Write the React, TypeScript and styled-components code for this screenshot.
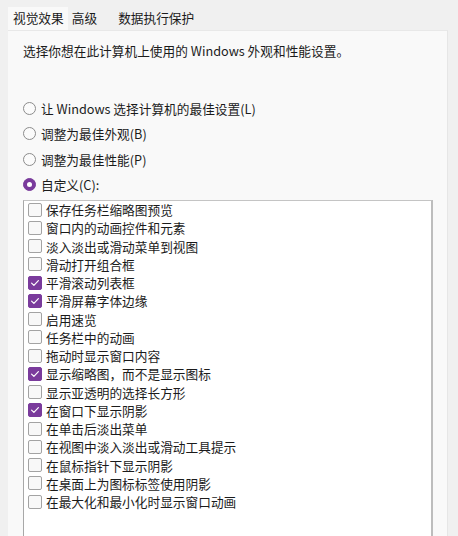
import React from "react";
import styled, { createGlobalStyle } from "styled-components";

const Global = createGlobalStyle`
  html, body { margin: 0; padding: 0; background: #f0f0f0; }
  body {
    font-family: "Noto Sans CJK SC", "Noto Sans", sans-serif;
    color: #1b1b1b;
    font-size: 12.7px;
  }
`;

const Page = styled.div`
  width: 458px;
  height: 536px;
  overflow: hidden;
  background: #f0f0f0;
  display: flex;
  flex-direction: column;
`;

const TabBar = styled.div`
  display: flex;
  align-items: flex-end;
  height: 30px;
  padding-left: 8px;
  flex-shrink: 0;
`;

const Tab = styled.div<{ $active?: boolean; $pl: number; $pr: number }>`
  height: 23px;
  line-height: 22px;
  padding: 0 ${(p) => p.$pr}px 0 ${(p) => p.$pl}px;
  background: ${(p) => (p.$active ? "#f9f9f9" : "transparent")};
  white-space: nowrap;
`;

const Panel = styled.div`
  flex: 1;
  margin: 0 10px 0 8px;
  background: #f9f9f9;
  border-top: 1px solid #e8e8e8;
  border-right: 1px solid #e6e6e6;
  padding: 11px 14px 0 15px;
  display: flex;
  flex-direction: column;
  min-height: 0;
`;

const Description = styled.div`
  line-height: 18px;
  white-space: nowrap;
  margin-bottom: 39px;
`;

const RadioGroup = styled.div`
  display: flex;
  flex-direction: column;
  gap: 7.5px;
  margin-bottom: 6px;
`;

const RadioRow = styled.div`
  display: flex;
  align-items: center;
  height: 18px;
  white-space: nowrap;
`;

const RadioCircle = styled.span<{ $checked?: boolean }>`
  box-sizing: border-box;
  width: 13px;
  height: 13px;
  border-radius: 50%;
  margin-right: 5px;
  flex-shrink: 0;
  display: flex;
  align-items: center;
  justify-content: center;
  border: 1px solid ${(p) => (p.$checked ? "#7a3b9c" : "#8c8c8c")};
  background: ${(p) => (p.$checked ? "#7a3b9c" : "#fbfbfb")};
  &::after {
    content: "";
    display: ${(p) => (p.$checked ? "block" : "none")};
    width: 5px;
    height: 5px;
    border-radius: 50%;
    background: #ffffff;
  }
`;

const ListBox = styled.div`
  background: #ffffff;
  border-top: 1px solid #c4c4c4;
  border-left: 1px solid #a8a8a8;
  border-right: 2px solid #bdbdbd;
  height: 420px;
  padding-left: 4px;
  flex-shrink: 0;
`;

const CheckRow = styled.div`
  display: flex;
  align-items: center;
  height: 18.25px;
  white-space: nowrap;
`;

const CheckBox = styled.span<{ $checked?: boolean }>`
  box-sizing: border-box;
  width: 14px;
  height: 14px;
  border-radius: 2px;
  margin-right: 4px;
  flex-shrink: 0;
  display: flex;
  align-items: center;
  justify-content: center;
  border: 1px solid ${(p) => (p.$checked ? "#7a3b9c" : "#a3a3a3")};
  background: ${(p) => (p.$checked ? "#7a3b9c" : "#f8f8f8")};
`;

const CheckMark = () => (
  <svg width="10" height="10" viewBox="0 0 10 10">
    <path d="M1.6 5.1 L3.9 7.4 L8.4 2.6" fill="none" stroke="#ffffff" strokeWidth="1.2" strokeLinecap="round" strokeLinejoin="round" />
  </svg>
);

const radios = [
  { label: "让 Windows 选择计算机的最佳设置(L)", checked: false },
  { label: "调整为最佳外观(B)", checked: false },
  { label: "调整为最佳性能(P)", checked: false },
  { label: "自定义(C):", checked: true },
];

const items: [string, boolean][] = [
  ["保存任务栏缩略图预览", false],
  ["窗口内的动画控件和元素", false],
  ["淡入淡出或滑动菜单到视图", false],
  ["滑动打开组合框", false],
  ["平滑滚动列表框", true],
  ["平滑屏幕字体边缘", true],
  ["启用速览", false],
  ["任务栏中的动画", false],
  ["拖动时显示窗口内容", false],
  ["显示缩略图，而不是显示图标", true],
  ["显示亚透明的选择长方形", false],
  ["在窗口下显示阴影", true],
  ["在单击后淡出菜单", false],
  ["在视图中淡入淡出或滑动工具提示", false],
  ["在鼠标指针下显示阴影", false],
  ["在桌面上为图标标签使用阴影", false],
  ["在最大化和最小化时显示窗口动画", false],
];

export default function App() {
  return (
    <Page>
      <Global />
      <TabBar>
        <Tab $active $pl={5} $pr={4}>视觉效果</Tab>
        <Tab $pl={4} $pr={10}>高级</Tab>
        <Tab $pl={11} $pr={10}>数据执行保护</Tab>
      </TabBar>
      <Panel>
        <Description>选择你想在此计算机上使用的 Windows 外观和性能设置。</Description>
        <RadioGroup>
          {radios.map((r) => (
            <RadioRow key={r.label}>
              <RadioCircle $checked={r.checked} />
              {r.label}
            </RadioRow>
          ))}
        </RadioGroup>
        <ListBox>
          {items.map(([label, checked]) => (
            <CheckRow key={label}>
              <CheckBox $checked={checked}>{checked && <CheckMark />}</CheckBox>
              {label}
            </CheckRow>
          ))}
        </ListBox>
      </Panel>
    </Page>
  );
}
